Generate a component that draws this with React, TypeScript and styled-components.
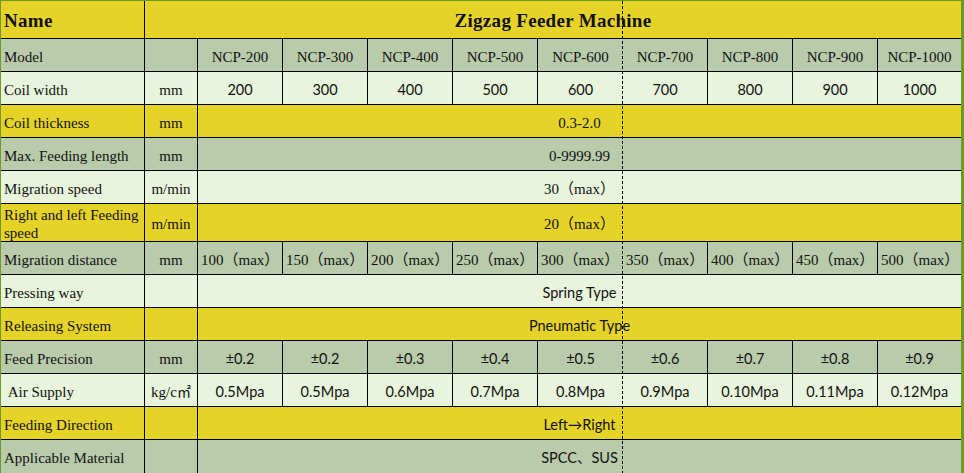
import React from 'react';
import styled, { createGlobalStyle } from 'styled-components';

const GlobalStyle = createGlobalStyle`
  html, body {
    margin: 0;
    padding: 0;
    background: #ffffff;
  }
`;

type Tone = 'yellow' | 'grey' | 'light';

const tones: Record<Tone, string> = {
  yellow: '#e6d327',
  grey: '#b9cbab',
  light: '#e8f5dc',
};

const SERIF = `'Liberation Serif', 'Noto Sans CJK SC', serif`;
const SANS = `Lato, 'Noto Sans CJK SC', sans-serif`;

const Sheet = styled.div`
  position: relative;
  width: 964px;
  height: 473px;
  box-sizing: border-box;
  border-top: 1px solid #6f9a2a;
  border-left: 1px solid #6f9a2a;
  border-right: 3px solid #6f9a2a;
  display: grid;
  grid-template-columns: 144px 53px repeat(8, 85px) 1fr;
  grid-template-rows: 38px repeat(5, 33px) 38px repeat(7, 33px);
  overflow: hidden;
  color: #111;
`;

const Cell = styled.div<{
  $tone: Tone;
  $span?: number;
  $align?: 'left' | 'center';
  $sans?: boolean;
  $noRight?: boolean;
  $noBottom?: boolean;
}>`
  grid-column: span ${p => p.$span || 1};
  background: ${p => tones[p.$tone]};
  box-sizing: border-box;
  border-right: ${p => (p.$noRight ? 'none' : '1px solid #000')};
  border-bottom: ${p => (p.$noBottom ? 'none' : '1px solid #000')};
  display: flex;
  align-items: center;
  justify-content: ${p => (p.$align === 'left' ? 'flex-start' : 'center')};
  padding: 3px 0 0 ${p => (p.$align === 'left' ? '3px' : '0')};
  font-family: ${p => (p.$sans ? SANS : SERIF)};
  font-size: ${p => (p.$sans ? '14.5px' : '15px')};
  line-height: 18px;
  white-space: nowrap;
`;

const Label = styled(Cell)`
  white-space: normal;
`;

const HeadCell = styled(Cell)`
  font-size: 19px;
  font-weight: bold;
  letter-spacing: 0.3px;
  padding-top: 2px;
`;

const Unit = styled.span`
  font-family: 'Noto Sans CJK SC', sans-serif;
  font-size: 14px;
  position: relative;
  top: -1px;
`;

const PageBreak = styled.div`
  position: absolute;
  top: 0;
  bottom: 0;
  left: 621px;
  width: 1px;
  background: repeating-linear-gradient(to bottom, #000 0 3px, transparent 3px 5px);
  pointer-events: none;
`;

type RowDef = {
  label: string;
  unit?: React.ReactNode;
  tone: Tone;
  values?: string[];
  merged?: string;
  sans?: boolean;
  left?: boolean;
};

const rows: RowDef[] = [
  {
    label: 'Model',
    tone: 'grey',
    values: ['NCP-200', 'NCP-300', 'NCP-400', 'NCP-500', 'NCP-600', 'NCP-700', 'NCP-800', 'NCP-900', 'NCP-1000'],
  },
  {
    label: 'Coil width',
    unit: 'mm',
    tone: 'light',
    sans: true,
    values: ['200', '300', '400', '500', '600', '700', '800', '900', '1000'],
  },
  { label: 'Coil thickness', unit: 'mm', tone: 'yellow', merged: '0.3-2.0' },
  { label: 'Max. Feeding length', unit: 'mm', tone: 'grey', merged: '0-9999.99' },
  { label: 'Migration speed', unit: 'm/min', tone: 'light', merged: '30（max）' },
  { label: 'Right and left Feeding speed', unit: 'm/min', tone: 'yellow', merged: '20（max）' },
  {
    label: 'Migration distance',
    unit: 'mm',
    tone: 'grey',
    left: true,
    values: ['100（max）', '150（max）', '200（max）', '250（max）', '300（max）', '350（max）', '400（max）', '450（max）', '500（max）'],
  },
  { label: 'Pressing way', tone: 'light', merged: 'Spring Type', sans: true },
  { label: 'Releasing System', tone: 'yellow', merged: 'Pneumatic Type', sans: true },
  {
    label: 'Feed Precision',
    unit: 'mm',
    tone: 'grey',
    sans: true,
    values: ['±0.2', '±0.2', '±0.3', '±0.4', '±0.5', '±0.6', '±0.7', '±0.8', '±0.9'],
  },
  {
    label: '\u00a0Air Supply',
    unit: (
      <>
        kg/c<Unit>㎡</Unit>
      </>
    ),
    tone: 'light',
    sans: true,
    values: ['0.5Mpa', '0.5Mpa', '0.6Mpa', '0.7Mpa', '0.8Mpa', '0.9Mpa', '0.10Mpa', '0.11Mpa', '0.12Mpa'],
  },
  { label: 'Feeding Direction', tone: 'yellow', merged: 'Left→Right', sans: true },
  { label: 'Applicable Material', tone: 'grey', merged: 'SPCC、SUS', sans: true },
];

export default function App(): React.JSX.Element {
  return (
    <>
      <GlobalStyle />
      <Sheet>
        <HeadCell $tone="yellow" $align="left">Name</HeadCell>
        <HeadCell $tone="yellow" $span={10} $noRight>Zigzag Feeder Machine</HeadCell>

        {rows.map((row, i) => {
          const lastRow = i === rows.length - 1;
          return (
            <React.Fragment key={row.label}>
              <Label $tone={row.tone} $align="left" $noBottom={lastRow}>{row.label}</Label>
              <Cell $tone={row.tone} $noBottom={lastRow}>{row.unit}</Cell>
              {row.merged ? (
                <Cell $tone={row.tone} $span={9} $sans={row.sans} $noRight $noBottom={lastRow}>
                  {row.merged}
                </Cell>
              ) : (
                row.values?.map((v, j) => (
                  <Cell
                    key={j}
                    $tone={row.tone}
                    $sans={row.sans}
                    $align={row.left ? 'left' : 'center'}
                    $noRight={j === 4 || j === 8}
                    $noBottom={lastRow}
                  >
                    {v}
                  </Cell>
                ))
              )}
            </React.Fragment>
          );
        })}
        <PageBreak />
      </Sheet>
    </>
  );
}
